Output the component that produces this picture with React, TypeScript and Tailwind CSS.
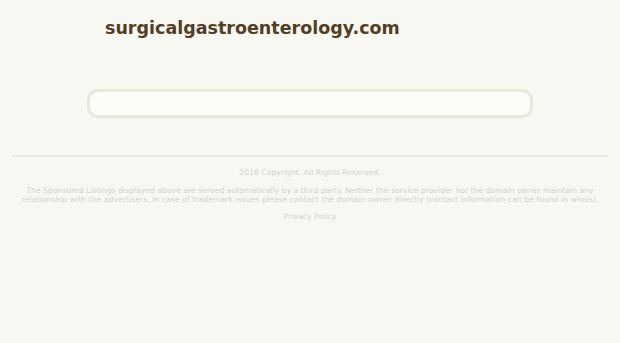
export default function App() {
  return (
    <div
      className="min-h-[343px] w-full bg-[#f8f8f3]"
      style={{ fontFamily: '"DejaVu Sans", Verdana, sans-serif' }}
    >
      <div className="px-[105px] pt-[17px]">
        <h1 className="text-[17.5px] font-bold leading-[22px] text-[#533f25]">
          surgicalgastroenterology.com
        </h1>
      </div>

      {/* search box */}
      <div className="mt-[50px] flex justify-center">
        <div className="h-[29px] w-[446px] rounded-[11px] border-[3px] border-[#e9e9d9] bg-[#fcfcf9]" />
      </div>

      <div className="mx-[12px] mt-[37px] h-[2px] bg-[#ebebe5]" />

      {/* footer */}
      <div className="px-[12px] pt-[11px] text-center text-[7.7px] leading-[9px] text-[#d2d2ca]">
        <p>2016 Copyright. All Rights Reserved.</p>
        <p className="mt-[9px]">
          The Sponsored Listings displayed above are served automatically by a third party. Neither the service provider nor the domain owner maintain any
          <br />
          <span className="tracking-[0.04px]">
            relationship with the advertisers. In case of trademark issues please contact the domain owner directly (contact information can be found in whois).
          </span>
        </p>
        <p className="mt-[8px]">Privacy Policy</p>
      </div>
    </div>
  )
}
